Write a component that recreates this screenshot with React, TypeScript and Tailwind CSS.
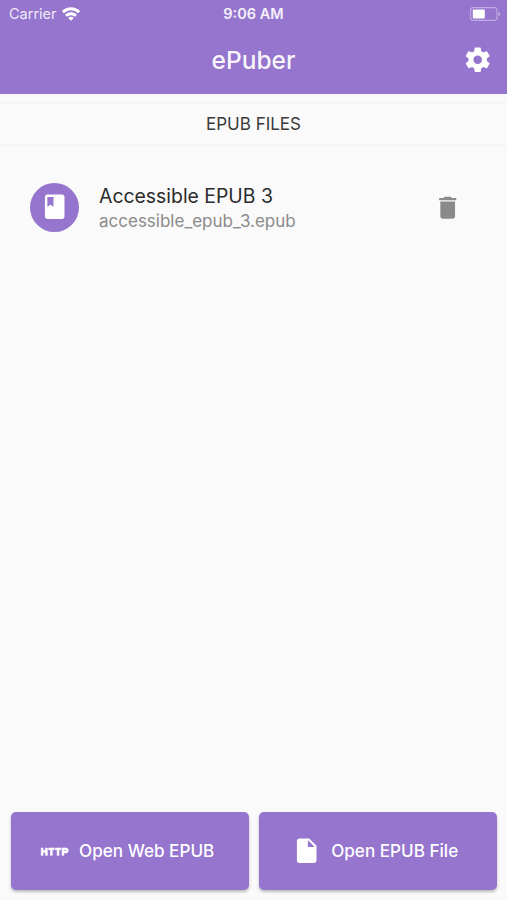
import { MdBook, MdDelete, MdHttp, MdInsertDriveFile } from "react-icons/md";

interface EpubFile {
  title: string;
  fileName: string;
}

const files: EpubFile[] = [{ title: "Accessible EPUB 3", fileName: "accessible_epub_3.epub" }];

function WifiIcon() {
  return (
    <svg viewBox="0 0 18 14" className="h-[14px] w-[18px]" fill="none" stroke="currentColor" strokeWidth="2.9">
      <path d="M0.9 5.1a11.6 11.6 0 0 1 16.2 0" />
      <path d="M4 8.7a7.2 7.2 0 0 1 10 0" />
      <path d="M9 13.8 6.2 11a4 4 0 0 1 5.6 0z" fill="currentColor" stroke="none" />
    </svg>
  );
}

function BatteryIcon() {
  return (
    <svg viewBox="0 0 31 14" className="h-[14px] w-[31px]" fill="none">
      <rect x="0.6" y="0.6" width="26.4" height="12.8" rx="2.6" stroke="#fff" strokeOpacity="0.4" strokeWidth="1.1" />
      <rect x="2.8" y="2.6" width="12" height="9" rx="1" fill="#fff" />
      <path d="M28.4 4.8c2.4.8 2.4 3.6 0 4.4z" fill="#fff" fillOpacity="0.45" />
    </svg>
  );
}

function GearIcon() {
  return (
    <svg viewBox="0 0 24 24" className="size-[29.4px]" fill="currentColor">
      <path d="M19.43 12.98c.04-.32.07-.64.07-.98s-.03-.66-.07-.98l2.11-1.65c.19-.15.24-.42.12-.64l-2-3.46c-.12-.22-.39-.3-.61-.22l-2.49 1c-.52-.4-1.08-.73-1.69-.98l-.38-2.65C14.46 2.18 14.25 2 14 2h-4c-.25 0-.46.18-.49.42l-.38 2.65c-.61.25-1.17.59-1.69.98l-2.49-1c-.23-.09-.49 0-.61.22l-2 3.46c-.13.22-.07.49.12.64l2.11 1.65c-.04.32-.07.65-.07.98s.03.66.07.98l-2.11 1.65c-.19.15-.24.42-.12.64l2 3.46c.12.22.39.3.61.22l2.49-1c.52.4 1.08.73 1.69.98l.38 2.65c.03.24.24.42.49.42h4c.25 0 .46-.18.49-.42l.38-2.65c.61-.25 1.17-.59 1.69-.98l2.49 1c.23.09.49 0 .61-.22l2-3.46c.12-.22.07-.49-.12-.64l-2.11-1.65zM12 15.5c-1.93 0-3.5-1.57-3.5-3.5s1.57-3.5 3.5-3.5 3.5 1.57 3.5 3.5-1.57 3.5-3.5 3.5z" />
    </svg>
  );
}

function StatusBar() {
  return (
    <div className="grid h-[27px] grid-cols-3 items-center text-[14.5px] leading-none">
      <div className="flex items-center gap-[5px] pl-[9px]">
        <span className="pt-px text-white/85">Carrier</span>
        <WifiIcon />
      </div>
      <span className="pt-px text-center font-semibold text-white/90">9:06 AM</span>
      <div className="flex justify-end pr-[6px]">
        <BatteryIcon />
      </div>
    </div>
  );
}

export default function App() {
  return (
    <div className="flex h-[900px] w-full flex-col bg-[#fafafa] font-['Inter',sans-serif]">
      <header className="h-[94px] shrink-0 bg-[#9575cd] text-white">
        <StatusBar />
        <div className="grid h-[66px] grid-cols-[1fr_auto_1fr] items-center">
          <h1 className="col-start-2 text-[24.5px] font-medium leading-none text-white/95">ePuber</h1>
          <button type="button" aria-label="Settings" className="justify-self-end pr-[15px]">
            <GearIcon />
          </button>
        </div>
      </header>

      <h2 className="mt-[9px] flex h-[42px] shrink-0 items-center justify-center border-y border-[#f5f5f5] pt-px text-[17px] text-[#3a3a3a]">
        EPUB FILES
      </h2>

      <ul className="mt-[13px] flex-1">
        {files.map((file) => (
          <li key={file.fileName} className="flex h-[98px] items-center pl-[30px] pr-[44.5px]">
            <span className="flex size-[49px] items-center justify-center rounded-full bg-[#9575cd] text-white">
              <MdBook size={29.4} />
            </span>
            <div className="ml-5 flex-1 pt-[3px]">
              <p className="text-[19.4px] leading-[25px] text-[#2b2b2b]">{file.title}</p>
              <p className="text-[17px] leading-[25px] text-[#8a8a8a]">{file.fileName}</p>
            </div>
            <button type="button" aria-label="Delete" className="pt-[2px] text-[#8a8a8a]">
              <MdDelete size={29.4} />
            </button>
          </li>
        ))}
      </ul>

      <footer className="grid shrink-0 grid-cols-2 gap-[10px] px-[10.5px] pb-[10px] text-[17.1px] font-medium text-white">
        <button
          type="button"
          className="flex h-[78px] items-center justify-center gap-[10px] rounded-[5px] bg-[#9575cd] pr-[5px] shadow-[0_2px_3px_rgba(0,0,0,0.25)]"
        >
          {/* heavier than the stock icon; the first path is only its empty bounds */}
          <MdHttp
            size={29.4}
            className="mt-px [&>path:not([fill=none])]:stroke-current [&>path:not([fill=none])]:stroke-[0.5px]"
          />
          Open Web EPUB
        </button>
        <button
          type="button"
          className="flex h-[78px] items-center justify-center gap-[10px] rounded-[5px] bg-[#9575cd] pr-[5px] shadow-[0_2px_3px_rgba(0,0,0,0.25)]"
        >
          <MdInsertDriveFile size={29.4} />
          Open EPUB File
        </button>
      </footer>
    </div>
  );
}
